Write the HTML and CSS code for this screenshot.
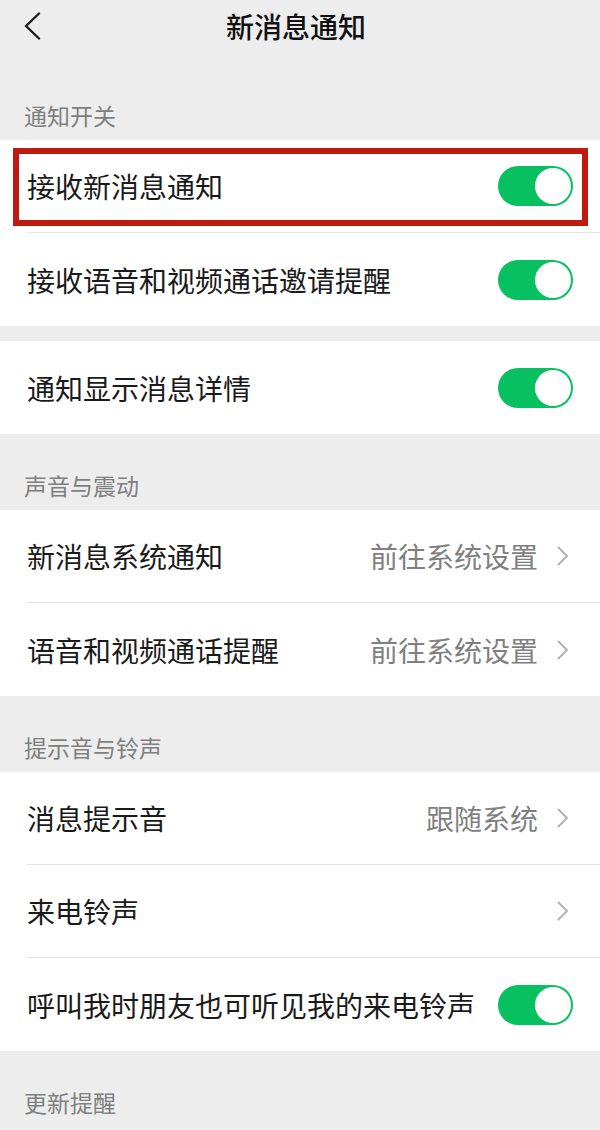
FILE: index.html
```html
<!DOCTYPE html>
<html lang="zh-CN">
<head>
<meta charset="utf-8">
<title>新消息通知</title>
<link rel="stylesheet" href="styles.css">
</head>
<body>
<div class="page">
  <header class="nav">
    <div class="nav-left">
      <svg class="back" width="18" height="28" viewBox="0 0 18 28"><path d="M16 1.5 L3 14 L16 26.5" fill="none" stroke="#1a1a1a" stroke-width="2.4" stroke-linecap="round" stroke-linejoin="round"/></svg>
    </div>
    <h1 class="title">新消息通知</h1>
    <div class="nav-right"></div>
  </header>

  <div class="section-label first">通知开关</div>
  <div class="group">
    <div class="row highlighted">
      <div class="row-inner">
        <span class="row-text">接收新消息通知</span>
        <span class="switch"><span class="knob"></span></span>
      </div>
      <div class="mark"></div>
    </div>
    <div class="row">
      <div class="row-inner">
        <span class="row-text">接收语音和视频通话邀请提醒</span>
        <span class="switch"><span class="knob"></span></span>
      </div>
    </div>
  </div>
  <div class="gap"></div>
  <div class="group">
    <div class="row">
      <div class="row-inner">
        <span class="row-text">通知显示消息详情</span>
        <span class="switch"><span class="knob"></span></span>
      </div>
    </div>
  </div>

  <div class="section-label">声音与震动</div>
  <div class="group">
    <div class="row">
      <div class="row-inner link">
        <span class="row-text">新消息系统通知</span>
        <span class="value">前往系统设置</span>
        <svg class="chev" width="12" height="20" viewBox="0 0 12 20"><path d="M1.5 1.5 L10 10 L1.5 18.5" fill="none" stroke="#b2b2b2" stroke-width="2" stroke-linecap="round" stroke-linejoin="round"/></svg>
      </div>
    </div>
    <div class="row">
      <div class="row-inner link">
        <span class="row-text">语音和视频通话提醒</span>
        <span class="value">前往系统设置</span>
        <svg class="chev" width="12" height="20" viewBox="0 0 12 20"><path d="M1.5 1.5 L10 10 L1.5 18.5" fill="none" stroke="#b2b2b2" stroke-width="2" stroke-linecap="round" stroke-linejoin="round"/></svg>
      </div>
    </div>
  </div>

  <div class="section-label">提示音与铃声</div>
  <div class="group">
    <div class="row">
      <div class="row-inner link">
        <span class="row-text">消息提示音</span>
        <span class="value">跟随系统</span>
        <svg class="chev" width="12" height="20" viewBox="0 0 12 20"><path d="M1.5 1.5 L10 10 L1.5 18.5" fill="none" stroke="#b2b2b2" stroke-width="2" stroke-linecap="round" stroke-linejoin="round"/></svg>
      </div>
    </div>
    <div class="row">
      <div class="row-inner link">
        <span class="row-text">来电铃声</span>
        <svg class="chev" width="12" height="20" viewBox="0 0 12 20"><path d="M1.5 1.5 L10 10 L1.5 18.5" fill="none" stroke="#b2b2b2" stroke-width="2" stroke-linecap="round" stroke-linejoin="round"/></svg>
      </div>
    </div>
    <div class="row">
      <div class="row-inner">
        <span class="row-text">呼叫我时朋友也可听见我的来电铃声</span>
        <span class="switch"><span class="knob"></span></span>
      </div>
    </div>
  </div>

  <div class="section-label">更新提醒</div>
</div>
</body>
</html>
```

FILE: styles.css
```css
* { box-sizing: border-box; }
html, body { margin: 0; padding: 0; }
body {
  background: #ededed;
  font-family: "Noto Sans CJK SC", "Noto Sans", sans-serif;
  color: #1a1a1a;
}
.page {
  width: 600px;
  min-height: 1130px;
  background: #ededed;
  overflow: hidden;
}
.nav {
  height: 52px;
  display: grid;
  grid-template-columns: 1fr auto 1fr;
  align-items: center;
}
.nav-left {
  display: flex;
  align-items: center;
  padding-left: 23px;
}
.back { display: block; margin-top: -1px; }
.title {
  margin: 0;
  font-size: 28px;
  font-weight: 500;
  line-height: 1;
  color: #111;
  letter-spacing: 0;
  transform: translateX(-4px);
}
.section-label {
  height: 76px;
  display: flex;
  align-items: flex-end;
  padding: 0 0 13px 24px;
  font-size: 23px;
  line-height: 1;
  color: #7f7f7f;
}
.section-label.first { height: 88px; }
.gap { height: 15px; }
.group { background: #fff; }
.row {
  position: relative;
  padding-left: 27px;
}
.row-inner {
  height: 93px;
  display: flex;
  align-items: center;
  padding-right: 27px;
  border-bottom: 1px solid #e6e6e6;
}
.row:last-child .row-inner { border-bottom: none; }
.row-inner.link { padding-right: 31px; }
.row-text {
  flex: 1;
  font-size: 28px;
  line-height: 1;
  color: #1a1a1a;
  white-space: nowrap;
}
.value {
  font-size: 28px;
  line-height: 1;
  color: #7f7f7f;
  margin-right: 19px;
}
.chev { display: block; flex: none; }
.switch {
  flex: none;
  width: 75px;
  height: 40px;
  border-radius: 20px;
  background: #07c160;
  display: flex;
  align-items: center;
  justify-content: flex-end;
  padding-right: 2px;
}
.knob {
  width: 36px;
  height: 36px;
  border-radius: 50%;
  background: #fff;
}
.mark {
  position: absolute;
  left: 13px;
  right: 12px;
  top: 8px;
  bottom: 7px;
  border: 6px solid #bf1a10;
  pointer-events: none;
}
```
